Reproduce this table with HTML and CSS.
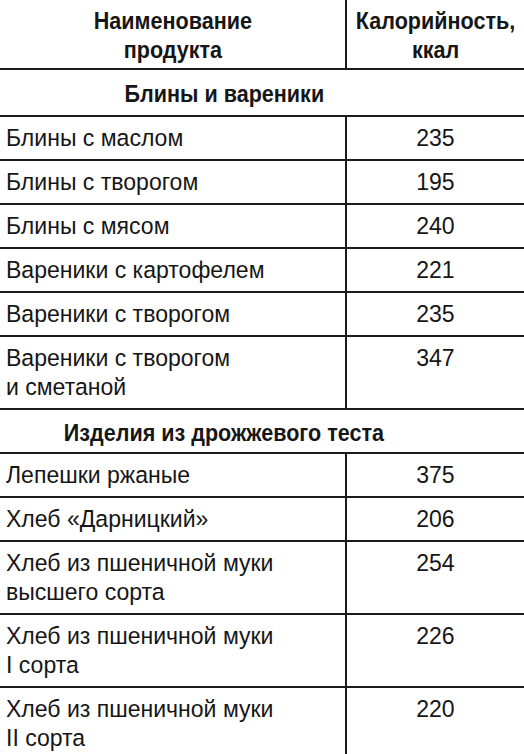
FILE: index.html
```html
<!DOCTYPE html>
<html lang="ru">
<head>
<meta charset="utf-8">
<title>Калорийность</title>
<link rel="stylesheet" href="styles.css">
</head>
<body>
<table class="cal">
  <colgroup><col class="c-name"><col class="c-val"></colgroup>
  <thead>
    <tr><th class="h-name"><span class="t">Наименование<br>продукта</span></th><th class="h-val"><span class="t">Калорийность,<br>ккал</span></th></tr>
  </thead>
  <tbody>
    <tr class="sec"><td colspan="2"><span class="t">Блины и вареники</span></td></tr>
    <tr><td class="n"><span class="t">Блины с маслом</span></td><td class="v"><span class="t">235</span></td></tr>
    <tr><td class="n"><span class="t">Блины с творогом</span></td><td class="v"><span class="t">195</span></td></tr>
    <tr><td class="n"><span class="t">Блины с мясом</span></td><td class="v"><span class="t">240</span></td></tr>
    <tr><td class="n"><span class="t">Вареники с картофелем</span></td><td class="v"><span class="t">221</span></td></tr>
    <tr><td class="n"><span class="t">Вареники с творогом</span></td><td class="v"><span class="t">235</span></td></tr>
    <tr><td class="n"><span class="t">Вареники с творогом<br>и сметаной</span></td><td class="v"><span class="t">347</span></td></tr>
    <tr class="sec sec-tight"><td colspan="2"><span class="t">Изделия из дрожжевого теста</span></td></tr>
    <tr><td class="n"><span class="t">Лепешки ржаные</span></td><td class="v"><span class="t">375</span></td></tr>
    <tr><td class="n"><span class="t">Хлеб «Дарницкий»</span></td><td class="v"><span class="t">206</span></td></tr>
    <tr><td class="n"><span class="t">Хлеб из пшеничной муки<br>высшего сорта</span></td><td class="v"><span class="t">254</span></td></tr>
    <tr><td class="n"><span class="t">Хлеб из пшеничной муки<br>I сорта</span></td><td class="v"><span class="t">226</span></td></tr>
    <tr><td class="n"><span class="t">Хлеб из пшеничной муки<br>II сорта</span></td><td class="v"><span class="t">220</span></td></tr>
  </tbody>
</table>
</body>
</html>
```
FILE: styles.css
```css
html, body { margin: 0; padding: 0; background: #fff; }
body { overflow: hidden; }

.cal {
  width: 524px;
  border-collapse: collapse;
  table-layout: fixed;
  font-family: "Liberation Sans", Arial, sans-serif;
  font-size: 24.5px;
  line-height: 29px;
  color: #161616;
}
.c-name { width: 346px; }
.c-val { width: 178px; }

.cal th, .cal td {
  padding: 6px 6px 7px;
  vertical-align: top;
  border-bottom: 2px solid #1b1b1b;
  white-space: nowrap;
}

/* condensed look: narrow each text run */
.t {
  display: inline-block;
  vertical-align: top;
  transform: scaleX(0.94);
  transform-origin: left center;
}

.cal th {
  font-weight: bold;
  text-align: center;
  padding: 6px 0 4px;
}
.cal th .t,
.sec .t {
  transform: scaleX(0.88);
  transform-origin: center;
  margin: 0 -40px;
}

.cal th.h-name,
.cal td.n { border-right: 2px solid #1b1b1b; }

.cal td.v { text-align: center; padding-left: 0; padding-right: 0; }
.cal td.v .t { transform-origin: center; }

.sec td {
  font-weight: bold;
  text-align: center;
  padding: 9px 76px 7px 0;
}
.sec-tight td { padding-top: 8px; padding-bottom: 5px; }
```
